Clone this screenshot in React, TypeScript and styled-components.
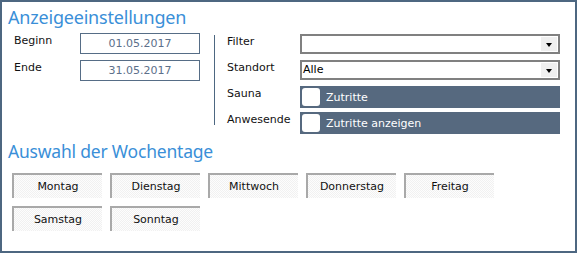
import React from "react";
import styled, { createGlobalStyle } from "styled-components";

const GlobalStyle = createGlobalStyle`
  html, body {
    margin: 0;
    padding: 0;
    background: #ffffff;
  }
  body {
    font-family: "DejaVu Sans", Verdana, sans-serif;
    font-size: 11px;
    color: #111111;
  }
`;

export const Frame = styled.div`
  box-sizing: border-box;
  width: 577px;
  height: 253px;
  border: 2px solid #4d6781;
  padding: 4px 0 0 6px;
  background: #ffffff;
`;

export const SectionTitle = styled.h2<{ $size?: number; $gap?: number }>`
  margin: ${(p) => p.$gap ?? 0}px 0 0 0;
  font-family: "Noto Sans", "Open Sans", sans-serif;
  font-weight: 400;
  font-size: ${(p) => p.$size ?? 18}px;
  line-height: 22px;
  color: #3a8fd8;
  letter-spacing: -0.2px;
`;

export const SettingsRow = styled.div`
  display: flex;
  margin-top: 5px;
`;

export const LeftPanel = styled.div`
  display: grid;
  grid-template-columns: 66px 120px;
  grid-template-rows: 27px 27px;
  padding-left: 6px;
  align-content: start;
  align-items: start;
`;

export const RightPanel = styled.div`
  display: grid;
  grid-template-columns: 73px 260px;
  grid-template-rows: 26px 26px 26px 22px;
  padding: 1px 0 0 12px;
  align-content: start;
  align-items: start;
`;

export const Separator = styled.div`
  width: 1px;
  height: 90px;
  margin: 2px 0 0 14px;
  background: #4d6781;
`;

export const Label = styled.div`
  line-height: 16px;
  white-space: nowrap;
`;

export const DateBox = styled.div`
  box-sizing: border-box;
  height: 21px;
  border: 1px solid #566d86;
  color: #5c708a;
  text-align: center;
  line-height: 20px;
`;

export const Select = styled.div`
  box-sizing: border-box;
  display: flex;
  align-items: center;
  height: 20px;
  border: 2px solid #808080;
  background: #ffffff;
  padding-left: 1px;
`;

export const SelectValue = styled.span`
  flex: 1;
  color: #000000;
  line-height: 16px;
`;

export const ArrowBox = styled.span`
  display: flex;
  align-items: center;
  justify-content: center;
  width: 16px;
  height: 14px;
  margin-right: 1px;
  background: #efefef;
`;

export const Arrow = styled.span`
  width: 0;
  height: 0;
  border-left: 3.5px solid transparent;
  border-right: 3.5px solid transparent;
  border-top: 4px solid #000000;
  margin-top: 1px;
`;

export const CheckBar = styled.div`
  box-sizing: border-box;
  display: flex;
  align-items: center;
  gap: 6px;
  height: 22px;
  padding-left: 2px;
  background: #56697f;
  color: #ffffff;
`;

export const CheckSquare = styled.span`
  width: 18px;
  height: 18px;
  border-radius: 3px;
  background: #ffffff;
`;

export const DaysGrid = styled.div`
  display: grid;
  grid-template-columns: repeat(5, 90px);
  grid-auto-rows: 25px;
  column-gap: 8px;
  row-gap: 8px;
  margin-top: 11px;
  padding-left: 4px;
`;

export const DayButton = styled.div`
  box-sizing: border-box;
  display: flex;
  align-items: center;
  justify-content: center;
  border-top: 2px solid #a9a9a9;
  border-left: 2px solid #a9a9a9;
  background-color: #fbfbfb;
  background-image: repeating-conic-gradient(#f1f1f1 0% 25%, #fdfdfd 0% 50%);
  background-size: 2px 2px;
  color: #111111;
  padding-bottom: 1px;
`;

const days = ["Montag", "Dienstag", "Mittwoch", "Donnerstag", "Freitag", "Samstag", "Sonntag"];

const Dropdown = ({ value }: { value?: string }) => (
  <Select>
    <SelectValue>{value}</SelectValue>
    <ArrowBox>
      <Arrow />
    </ArrowBox>
  </Select>
);

const App = () => {
  return (
    <>
      <GlobalStyle />
      <Frame>
        <SectionTitle>Anzeigeeinstellungen</SectionTitle>

        <SettingsRow>
          <LeftPanel>
            <Label>Beginn</Label>
            <DateBox>01.05.2017</DateBox>
            <Label>Ende</Label>
            <DateBox>31.05.2017</DateBox>
          </LeftPanel>

          <Separator />

          <RightPanel>
            <Label>Filter</Label>
            <Dropdown />
            <Label>Standort</Label>
            <Dropdown value="Alle" />
            <Label>Sauna</Label>
            <CheckBar>
              <CheckSquare />
              Zutritte
            </CheckBar>
            <Label>Anwesende</Label>
            <CheckBar>
              <CheckSquare />
              Zutritte anzeigen
            </CheckBar>
          </RightPanel>
        </SettingsRow>

        <SectionTitle $size={17.5} $gap={6}>
          Auswahl der Wochentage
        </SectionTitle>

        <DaysGrid>
          {days.map((d) => (
            <DayButton key={d}>{d}</DayButton>
          ))}
        </DaysGrid>
      </Frame>
    </>
  );
};

export default App;
